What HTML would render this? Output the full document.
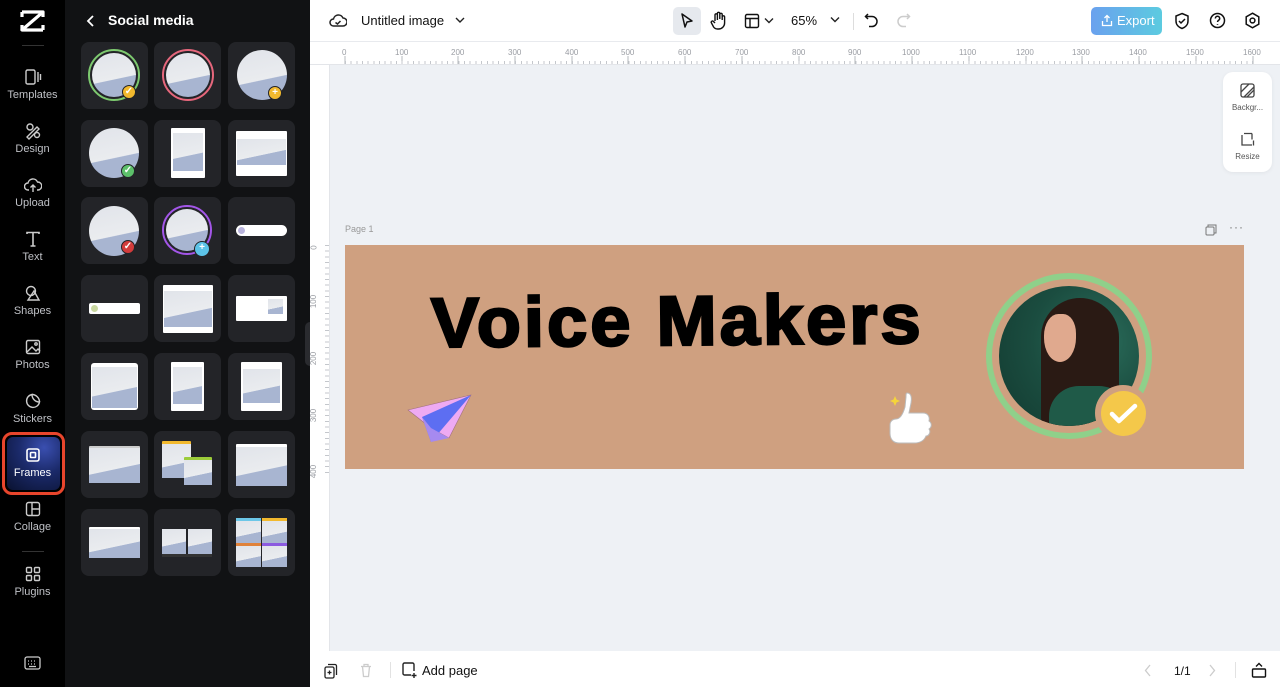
<!DOCTYPE html>
<html><head><meta charset="utf-8">
<style>
*{box-sizing:border-box;margin:0;padding:0}
body{width:1280px;height:687px;overflow:hidden;font-family:"Liberation Sans",sans-serif;background:#eef1f5;position:relative}
.abs{position:absolute}
#nav{left:0;top:0;width:65px;height:687px;background:#000}
.ni{position:absolute;left:0;width:65px;text-align:center;color:#bfc1c6;font-size:11px}
.ni svg{display:block;margin:0 auto 3px}
#panel{left:65px;top:0;width:245px;height:687px;background:#111214}
.tile{position:absolute;width:67px;height:67px;background:#232428;border-radius:8px;overflow:hidden}
.sky{background:linear-gradient(168deg,#e1e4ea 0%,#eaecef 58%,#a8b5d1 59%,#a8b5d1 100%)}
.circ{position:absolute;border-radius:50%}
.card{position:absolute;background:#fff;border-radius:1px}
.badge{position:absolute;width:14px;height:14px;border-radius:50%;border:1.5px solid #232428;color:#fff;font-size:10px;line-height:11px;text-align:center;font-weight:bold}
#top{left:310px;top:0;width:970px;height:42px;background:#fff;border-bottom:1px solid #e8eaee}
#ruler{left:310px;top:42px;width:970px;height:23px;background:#fff;border-bottom:1px solid #e3e5e9}
#lruler{left:310px;top:65px;width:20px;height:586px;background:#fff;border-right:1px solid #e3e5e9}
.rl{position:absolute;font-size:8px;color:#9a9da3}
#bottom{left:310px;top:651px;width:970px;height:36px;background:#fff}
</style></head><body>

<div id="nav" class="abs">
  <svg class="abs" style="left:20px;top:10px" width="25" height="22" viewBox="0 0 25 22"><path d="M2 2h21L2 20h21" fill="none" stroke="#fff" stroke-width="3.2" stroke-linejoin="round"/><path d="M2 2v5M23 2v5M2 20v-5M23 20v-5" stroke="#fff" stroke-width="3.2"/></svg>
  <div class="abs" style="left:22px;top:45px;width:22px;height:1px;background:#333"></div>
  <div class="ni" style="top:68px"><svg width="18" height="18" viewBox="0 0 18 18" fill="none" stroke="#ccc" stroke-width="1.4"><rect x="2" y="2" width="9" height="14" rx="1.5"/><path d="M14 4v10M16.5 6v6"/></svg>Templates</div>
  <div class="ni" style="top:122px"><svg width="18" height="18" viewBox="0 0 18 18" fill="none" stroke="#ccc" stroke-width="1.4"><circle cx="6" cy="5" r="3"/><path d="M3 15l10-10 2 2-10 10z"/><circle cx="13" cy="13" r="2.5"/></svg>Design</div>
  <div class="ni" style="top:176px"><svg width="18" height="18" viewBox="0 0 18 18" fill="none" stroke="#ccc" stroke-width="1.4"><path d="M5 14H4a3.5 3.5 0 010-7 5 5 0 019.5-1A3.5 3.5 0 0114 14h-1"/><path d="M9 16V9M6.5 11.5L9 9l2.5 2.5"/></svg>Upload</div>
  <div class="ni" style="top:230px"><svg width="18" height="18" viewBox="0 0 18 18" fill="none" stroke="#ccc" stroke-width="1.6"><path d="M3 4V2.5h12V4M9 2.5V16M6.5 16h5"/></svg>Text</div>
  <div class="ni" style="top:284px"><svg width="18" height="18" viewBox="0 0 18 18" fill="none" stroke="#ccc" stroke-width="1.4"><circle cx="7" cy="7" r="4.5"/><path d="M10 7l5 9H4z"/></svg>Shapes</div>
  <div class="ni" style="top:338px"><svg width="18" height="18" viewBox="0 0 18 18" fill="none" stroke="#ccc" stroke-width="1.4"><rect x="2.5" y="2.5" width="13" height="13" rx="1.5"/><path d="M3 14l5-5 4 4 2-2 2 2"/><circle cx="12" cy="6" r="1.2"/></svg>Photos</div>
  <div class="ni" style="top:392px"><svg width="18" height="18" viewBox="0 0 18 18" fill="none" stroke="#ccc" stroke-width="1.4"><path d="M15.5 10A6.5 6.5 0 118 2.5c0 4 3 7.5 7.5 7.5z"/><path d="M8 2.5c4 0 7.5 3.5 7.5 7.5"/></svg>Stickers</div>
  <div class="abs" style="left:2px;top:432px;width:63px;height:63px;border:3.5px solid #e8452c;border-radius:10px;background:#000;padding:2px">
    <div style="width:100%;height:100%;border-radius:6px;background:radial-gradient(circle at 70% 20%,#3a4fb0 0%,#1b2a6a 45%,#0a1230 100%)"></div>
  </div>
  <div class="ni" style="top:446px;color:#fff"><svg width="18" height="18" viewBox="0 0 18 18" fill="none" stroke="#fff" stroke-width="1.6"><rect x="3" y="3" width="12" height="12" rx="2"/><rect x="6.5" y="6.5" width="5" height="5" rx="0.8"/></svg>Frames</div>
  <div class="ni" style="top:500px"><svg width="18" height="18" viewBox="0 0 18 18" fill="none" stroke="#ccc" stroke-width="1.4"><rect x="2.5" y="2.5" width="13" height="13" rx="2"/><path d="M8 2.5v13M8 9h7.5"/></svg>Collage</div>
  <div class="abs" style="left:22px;top:551px;width:22px;height:1px;background:#333"></div>
  <div class="ni" style="top:565px"><svg width="18" height="18" viewBox="0 0 18 18" fill="none" stroke="#ccc" stroke-width="1.4"><rect x="2.5" y="2.5" width="5" height="5" rx="1"/><rect x="10.5" y="2.5" width="5" height="5" rx="1"/><rect x="2.5" y="10.5" width="5" height="5" rx="1"/><rect x="10.5" y="10.5" width="5" height="5" rx="1"/></svg>Plugins</div>
  <svg class="abs" style="left:24px;top:656px" width="17" height="14" viewBox="0 0 17 14" fill="none" stroke="#ccc" stroke-width="1.3"><rect x="1" y="1" width="15" height="12" rx="2"/><path d="M4 5h1M7 5h1M10 5h1M13 5h0M4 8h1M7 8h1M10 8h1M5 10.5h7"/></svg>
</div>

<div id="panel" class="abs">
  <svg class="abs" style="left:20px;top:14px" width="12" height="14" viewBox="0 0 12 14"><path d="M8 2L3 7l5 5" fill="none" stroke="#fff" stroke-width="1.8"/></svg>
  <div class="abs" style="left:43px;top:12px;color:#fff;font-size:14px;font-weight:bold">Social media</div>

  <div class="tile" style="left:16px;top:42px"><div class="circ" style="left:7px;top:7px;width:52px;height:52px;border:2px solid #7dc96f"></div><div class="circ sky" style="left:11px;top:11px;width:44px;height:44px"></div><div class="badge" style="left:41px;top:43px;background:#f2b92e">✓</div></div>
  <div class="tile" style="left:89px;top:42px"><div class="circ" style="left:8px;top:7px;width:52px;height:52px;border:2px solid #e6677c"></div><div class="circ sky" style="left:12px;top:11px;width:44px;height:44px"></div></div>
  <div class="tile" style="left:163px;top:42px"><div class="circ sky" style="left:9px;top:8px;width:50px;height:50px"></div><div class="badge" style="left:40px;top:44px;background:#f2b92e">+</div></div>
  <div class="tile" style="left:16px;top:120px"><div class="circ sky" style="left:8px;top:8px;width:50px;height:50px"></div><div class="badge" style="left:40px;top:44px;background:#5cc06a">✓</div></div>
  <div class="tile" style="left:89px;top:120px"><div class="card" style="left:17px;top:8px;width:34px;height:50px"><div class="sky" style="margin:5px 2px 0;height:38px"></div></div></div>
  <div class="tile" style="left:163px;top:120px"><div class="card" style="left:8px;top:11px;width:51px;height:45px"><div class="sky" style="margin:8px 1px 0;height:26px"></div></div></div>
  <div class="tile" style="left:16px;top:197px"><div class="circ sky" style="left:8px;top:9px;width:50px;height:50px"></div><div class="badge" style="left:40px;top:43px;background:#d33b3b">✓</div></div>
  <div class="tile" style="left:89px;top:197px"><div class="circ" style="left:8px;top:8px;width:50px;height:50px;border:2px solid #a356e8"></div><div class="circ sky" style="left:12px;top:12px;width:42px;height:42px"></div><div class="badge" style="left:40px;top:44px;width:16px;height:16px;background:#5cc3e8">+</div></div>
  <div class="tile" style="left:163px;top:197px"><div class="card" style="left:8px;top:28px;width:51px;height:11px;border-radius:6px"><div class="circ" style="left:2px;top:2px;width:7px;height:7px;background:#b9b4dd"></div></div></div>
  <div class="tile" style="left:16px;top:275px"><div class="card" style="left:8px;top:28px;width:51px;height:11px;border-radius:2px"><div class="circ" style="left:2px;top:2px;width:7px;height:7px;background:#c9d7a0"></div></div></div>
  <div class="tile" style="left:89px;top:275px"><div class="card" style="left:9px;top:10px;width:50px;height:48px"><div class="sky" style="margin:6px 1px 0;height:36px"></div></div></div>
  <div class="tile" style="left:163px;top:275px"><div class="card" style="left:8px;top:21px;width:51px;height:25px"><div class="sky" style="position:absolute;left:32px;top:3px;width:15px;height:15px"></div></div></div>
  <div class="tile" style="left:16px;top:353px"><div class="card" style="left:10px;top:10px;width:47px;height:47px;border-radius:3px"><div class="sky" style="margin:4px 1px 0;height:41px"></div></div></div>
  <div class="tile" style="left:89px;top:353px"><div class="card" style="left:17px;top:9px;width:33px;height:49px"><div class="sky" style="margin:5px 2px 0;height:37px"></div></div></div>
  <div class="tile" style="left:163px;top:353px"><div class="card" style="left:13px;top:9px;width:41px;height:49px"><div class="sky" style="margin:7px 2px 0;height:34px"></div></div></div>
  <div class="tile" style="left:16px;top:431px"><div class="card" style="left:8px;top:15px;width:51px;height:37px;background:#ccc"><div class="sky" style="margin:2px 0 0;height:35px"></div></div></div>
  <div class="tile" style="left:89px;top:431px"><div class="card" style="left:8px;top:10px;width:29px;height:37px;border-top:3px solid #f2b92e"><div class="sky" style="height:34px"></div></div><div class="card" style="left:30px;top:26px;width:28px;height:28px;border-top:3px solid #9ccc3a"><div class="sky" style="height:25px"></div></div></div>
  <div class="tile" style="left:163px;top:431px"><div class="card" style="left:8px;top:13px;width:51px;height:42px"><div class="sky" style="margin:3px 0 0;height:39px"></div></div></div>
  <div class="tile" style="left:16px;top:509px"><div class="card" style="left:8px;top:18px;width:51px;height:31px"><div class="sky" style="margin:2px 0 0;height:29px"></div></div></div>
  <div class="tile" style="left:89px;top:509px"><div class="sky" style="position:absolute;left:8px;top:20px;width:24px;height:25px"></div><div class="sky" style="position:absolute;left:34px;top:20px;width:24px;height:25px"></div><div style="position:absolute;left:8px;top:45px;width:50px;height:3px;background:#333"></div></div>
  <div class="tile" style="left:163px;top:509px"><div class="sky" style="position:absolute;left:8px;top:9px;width:25px;height:25px;border-top:3px solid #6cc7e8"></div><div class="sky" style="position:absolute;left:34px;top:9px;width:25px;height:25px;border-top:3px solid #f2b92e"></div><div class="sky" style="position:absolute;left:8px;top:34px;width:25px;height:24px;border-top:3px solid #e0823a"></div><div class="sky" style="position:absolute;left:34px;top:34px;width:25px;height:24px;border-top:3px solid #8c5be0"></div></div>
</div>
<div class="abs" style="left:305px;top:322px;width:10px;height:44px;background:#2a2b2f;border-radius:5px"></div>

<div id="top" class="abs">
  <svg class="abs" style="left:19px;top:12px" width="18" height="17" viewBox="0 0 18 17" fill="none" stroke="#222" stroke-width="1.5"><path d="M5 14H4.5a3.5 3.5 0 010-7 5 5 0 019.5-1A3.5 3.5 0 0114 14H5z"/><path d="M6.5 10.5l2 1.5 3-3"/></svg>
  <div class="abs" style="left:51px;top:13px;font-size:13px;color:#111">Untitled image</div>
  <svg class="abs" style="left:145px;top:16px" width="10" height="8"><path d="M1 2l4 4 4-4" fill="none" stroke="#222" stroke-width="1.4"/></svg>
  <div class="abs" style="left:363px;top:7px;width:28px;height:28px;background:#e6e9ee;border-radius:5px"></div>
  <svg class="abs" style="left:370px;top:12px" width="14" height="18" viewBox="0 0 14 18"><path d="M2 2l10 7-5 1-2 5z" fill="none" stroke="#111" stroke-width="1.5" stroke-linejoin="round"/></svg>
  <svg class="abs" style="left:400px;top:11px" width="17" height="19" viewBox="0 0 17 19" fill="none" stroke="#111" stroke-width="1.4"><path d="M5 10V4a1.2 1.2 0 012.4 0v5M7.4 8V2.5a1.2 1.2 0 012.4 0V8M9.8 8V3.5a1.2 1.2 0 012.4 0V9M12.2 9V6a1.2 1.2 0 012.4 0v6a6 6 0 01-6 6h-1a5 5 0 01-4-2L1.5 12a1.2 1.2 0 012-1.5L5 12"/></svg>
  <svg class="abs" style="left:434px;top:13px" width="16" height="16" viewBox="0 0 16 16" fill="none" stroke="#111" stroke-width="1.4"><rect x="1.5" y="1.5" width="13" height="13" rx="1.5"/><path d="M1.5 5.5h13M6 5.5v9"/></svg>
  <svg class="abs" style="left:454px;top:17px" width="10" height="8"><path d="M1 1.5l4 4 4-4" fill="none" stroke="#222" stroke-width="1.4"/></svg>
  <div class="abs" style="left:481px;top:13px;font-size:13px;color:#111">65%</div>
  <svg class="abs" style="left:520px;top:16px" width="10" height="8"><path d="M1 1.5l4 4 4-4" fill="none" stroke="#222" stroke-width="1.4"/></svg>
  <div class="abs" style="left:543px;top:13px;width:1px;height:17px;background:#ddd"></div>
  <svg class="abs" style="left:554px;top:12px" width="16" height="17" viewBox="0 0 16 17" fill="none" stroke="#111" stroke-width="1.5"><path d="M4 2L1.5 4.5 4 7"/><path d="M2 4.5h6a5 5 0 010 10H5"/></svg>
  <svg class="abs" style="left:585px;top:12px" width="16" height="17" viewBox="0 0 16 17" fill="none" stroke="#ccc" stroke-width="1.5"><path d="M12 2l2.5 2.5L12 7"/><path d="M14 4.5H8a5 5 0 000 10h3"/></svg>
  <div class="abs" style="left:781px;top:7px;width:71px;height:28px;border-radius:5px;background:linear-gradient(90deg,#6aa1ee,#5ccbe0);color:#fff;font-size:13px;line-height:28px;padding-left:26px">Export</div>
  <svg class="abs" style="left:791px;top:14px" width="12" height="13" viewBox="0 0 12 13" fill="none" stroke="#fff" stroke-width="1.3"><path d="M6 8V1.5M3.5 4L6 1.5 8.5 4M1.5 7v4.5h9V7"/></svg>
  <svg class="abs" style="left:864px;top:12px" width="16" height="18" viewBox="0 0 16 18" fill="none" stroke="#111" stroke-width="1.5"><path d="M8 1.5l6 2.5v5c0 4-3 6.5-6 7.5-3-1-6-3.5-6-7.5V4z"/><path d="M5 9l2 2 4-4"/></svg>
  <svg class="abs" style="left:899px;top:12px" width="17" height="17" viewBox="0 0 17 17" fill="none" stroke="#111" stroke-width="1.5"><circle cx="8.5" cy="8.5" r="7"/><path d="M6.3 6.5a2.2 2.2 0 114 1.2c-.8.6-1.8 1-1.8 2.3M8.5 12v.8"/></svg>
  <svg class="abs" style="left:934px;top:12px" width="17" height="17" viewBox="0 0 17 17" fill="none" stroke="#111" stroke-width="1.5"><path d="M8.5 1.2l6.3 3.6v7.4l-6.3 3.6-6.3-3.6V4.8z"/><circle cx="8.5" cy="8.5" r="2.4"/></svg>
</div>

<div id="ruler" class="abs">
  <svg class="abs" style="left:0;top:0" width="970" height="23">
    <g stroke="#b5b8bd" stroke-width="1">
      <path d="M35 14v8M92 14v8M148 14v8M205 14v8M262 14v8M318 14v8M375 14v8M432 14v8M489 14v8M545 14v8M602 14v8M659 14v8M716 14v8M772 14v8M829 14v8M886 14v8M943 14v8"/>
    </g>
  </svg>
  <div class="rl" style="left:32px;top:6px">0</div><div class="rl" style="left:85px;top:6px">100</div><div class="rl" style="left:141px;top:6px">200</div><div class="rl" style="left:198px;top:6px">300</div><div class="rl" style="left:255px;top:6px">400</div><div class="rl" style="left:311px;top:6px">500</div><div class="rl" style="left:368px;top:6px">600</div><div class="rl" style="left:425px;top:6px">700</div><div class="rl" style="left:482px;top:6px">800</div><div class="rl" style="left:538px;top:6px">900</div><div class="rl" style="left:592px;top:6px">1000</div><div class="rl" style="left:649px;top:6px">1100</div><div class="rl" style="left:706px;top:6px">1200</div><div class="rl" style="left:762px;top:6px">1300</div><div class="rl" style="left:819px;top:6px">1400</div><div class="rl" style="left:876px;top:6px">1500</div><div class="rl" style="left:933px;top:6px">1600</div>
  <div class="abs" style="left:35px;top:19px;width:910px;height:3px;background:repeating-linear-gradient(90deg,#c4c7cc 0 1px,transparent 1px 5.67px)"></div>
</div>

<div id="lruler" class="abs">
  <div class="abs" style="left:15px;top:180px;width:4px;height:230px;background:repeating-linear-gradient(180deg,#c4c7cc 0 1px,transparent 1px 5.67px)"></div>
  <div class="rl" style="left:2px;top:178px;transform:rotate(-90deg)">0</div>
  <div class="rl" style="left:-3px;top:232px;transform:rotate(-90deg)">100</div>
  <div class="rl" style="left:-3px;top:289px;transform:rotate(-90deg)">200</div>
  <div class="rl" style="left:-3px;top:346px;transform:rotate(-90deg)">300</div>
  <div class="rl" style="left:-3px;top:402px;transform:rotate(-90deg)">400</div>
</div>

<div class="abs" style="left:1223px;top:72px;width:49px;height:100px;background:#fff;border-radius:10px;box-shadow:0 1px 4px rgba(0,0,0,.06)">
  <svg class="abs" style="left:17px;top:11px" width="15" height="15" viewBox="0 0 15 15" fill="none" stroke="#444" stroke-width="1.3"><rect x="1" y="1" width="13" height="13" rx="2"/><path d="M1 9L9 1M4 14L14 4M7 14l7-7"/></svg>
  <div class="abs" style="left:0;top:31px;width:49px;text-align:center;font-size:8px;color:#555">Backgr...</div>
  <svg class="abs" style="left:17px;top:60px" width="15" height="15" viewBox="0 0 15 15" fill="none" stroke="#444" stroke-width="1.3"><path d="M2 3v10h10"/><path d="M4 1.5h8M12 1.5v6M13.5 8.5v5"/></svg>
  <div class="abs" style="left:0;top:80px;width:49px;text-align:center;font-size:8px;color:#555">Resize</div>
</div>

<div class="abs" style="left:345px;top:224px;font-size:9px;color:#999">Page 1</div>
<svg class="abs" style="left:1205px;top:224px" width="12" height="12" viewBox="0 0 12 12" fill="none" stroke="#777" stroke-width="1"><rect x="1" y="3" width="8" height="8" rx="1"/><path d="M3 3V1h8v8H9"/></svg>
<div class="abs" style="left:1229px;top:220px;font-size:12px;color:#777;letter-spacing:1px">···</div>

<div class="abs" style="left:345px;top:245px;width:899px;height:224px;background:#cfa080;overflow:hidden">
  <div class="abs" style="left:86px;top:38px;font-family:'Liberation Sans',sans-serif;font-weight:bold;font-size:70px;color:#000;letter-spacing:3px;transform:scaleX(1.03) rotate(-0.5deg);transform-origin:left;-webkit-text-stroke:2.5px #000;white-space:nowrap">Voice Makers</div>
  <svg class="abs" style="left:60px;top:147px" width="70" height="52" viewBox="0 0 70 52"><path d="M3 18L66 3 44 46 26 36z" fill="#eeaaf3" stroke="#a07080" stroke-width=".6"/><path d="M66 3L17 25l9 25z" fill="#5d6ef2"/><path d="M26 36l-9-11 9 25 18-4z" fill="#a68af0"/></svg>
  <svg class="abs" style="left:540px;top:145px" width="52" height="65" viewBox="0 0 52 65"><path d="M10 6l1.5 3.5L15 11l-3.5 1.5L10 16l-1.5-3.5L5 11l3.5-1.5z" fill="#f5d53a"/><path d="M22 3c4 0 5 4 4 10l-2 10h14c5 0 7 4 6 8 3 2 3 6 0 8 2 3 0 7-3 7-2 5-6 7-12 7H14c-6 0-9-4-9-10V35c0-4 3-6 6-6 4 0 7-5 9-12l1-10c0-3 0-4 1-4z" fill="#fff" stroke="#bbb" stroke-width="1"/></svg>
  <div class="abs" style="left:641px;top:28px;width:166px;height:166px;border-radius:50%;border:6px solid #8fd08a;background:#cfa080"></div>
  <div class="abs" style="left:654px;top:41px;width:140px;height:140px;border-radius:50%;background:radial-gradient(circle at 70% 40%,#2b6e5c 0%,#1b4d40 50%,#123a30 100%);overflow:hidden">
    <div class="abs" style="left:42px;top:12px;width:78px;height:130px;border-radius:40px 40px 10px 10px;background:#2a1a14"></div>
    <div class="abs" style="left:45px;top:28px;width:32px;height:48px;border-radius:45% 40% 50% 50%;background:#e0a98e"></div>
    <div class="abs" style="left:50px;top:100px;width:80px;height:60px;border-radius:30px 30px 0 0;background:#1f5a48"></div>
  </div>
  <div class="abs" style="left:750px;top:140px;width:56px;height:56px;border-radius:50%;background:#cfa080"></div>
  <div class="abs" style="left:756px;top:146px;width:45px;height:45px;border-radius:50%;background:#f4c84a"></div>
  <svg class="abs" style="left:764px;top:157px" width="30" height="24" viewBox="0 0 30 24"><path d="M3 12l7 7L26 4" fill="none" stroke="#fff" stroke-width="4.5" stroke-linecap="round" stroke-linejoin="round"/></svg>
</div>

<div id="bottom" class="abs">
  <svg class="abs" style="left:14px;top:12px" width="14" height="16" viewBox="0 0 14 16" fill="none" stroke="#222" stroke-width="1.3"><rect x="1" y="4" width="9" height="11" rx="1.5"/><path d="M4 1.5h7a1.5 1.5 0 011.5 1.5v9M5.5 7.5v4M3.5 9.5h4"/></svg>
  <svg class="abs" style="left:50px;top:12px" width="12" height="15" viewBox="0 0 12 15" fill="none" stroke="#ccc" stroke-width="1.3"><path d="M1 3.5h10M4 3.5V1.5h4v2M2.5 3.5l1 10h5l1-10"/></svg>
  <div class="abs" style="left:80px;top:11px;width:1px;height:16px;background:#e2e2e2"></div>
  <svg class="abs" style="left:92px;top:11px" width="16" height="17" viewBox="0 0 16 17" fill="none" stroke="#222" stroke-width="1.4"><path d="M9 13H2.5a1.5 1.5 0 01-1.5-1.5v-9A1.5 1.5 0 012.5 1h8A1.5 1.5 0 0112 2.5V9M12 11v5M9.5 13.5h5"/></svg>
  <div class="abs" style="left:112px;top:12px;font-size:13px;color:#111">Add page</div>
  <svg class="abs" style="left:834px;top:13px" width="8" height="13"><path d="M6 1L1.5 6.5 6 12" fill="none" stroke="#ccc" stroke-width="1.3"/></svg>
  <div class="abs" style="left:864px;top:13px;font-size:12px;color:#111">1/1</div>
  <svg class="abs" style="left:898px;top:13px" width="8" height="13"><path d="M2 1l4.5 5.5L2 12" fill="none" stroke="#ccc" stroke-width="1.3"/></svg>
  <div class="abs" style="left:925px;top:11px;width:1px;height:16px;background:#e2e2e2"></div>
  <svg class="abs" style="left:941px;top:11px" width="16" height="16" viewBox="0 0 16 16" fill="none" stroke="#111" stroke-width="1.4"><rect x="1.5" y="7" width="13" height="8" rx="1"/><path d="M5 4.5L8 1.5l3 3"/></svg>
</div>
</body></html>
